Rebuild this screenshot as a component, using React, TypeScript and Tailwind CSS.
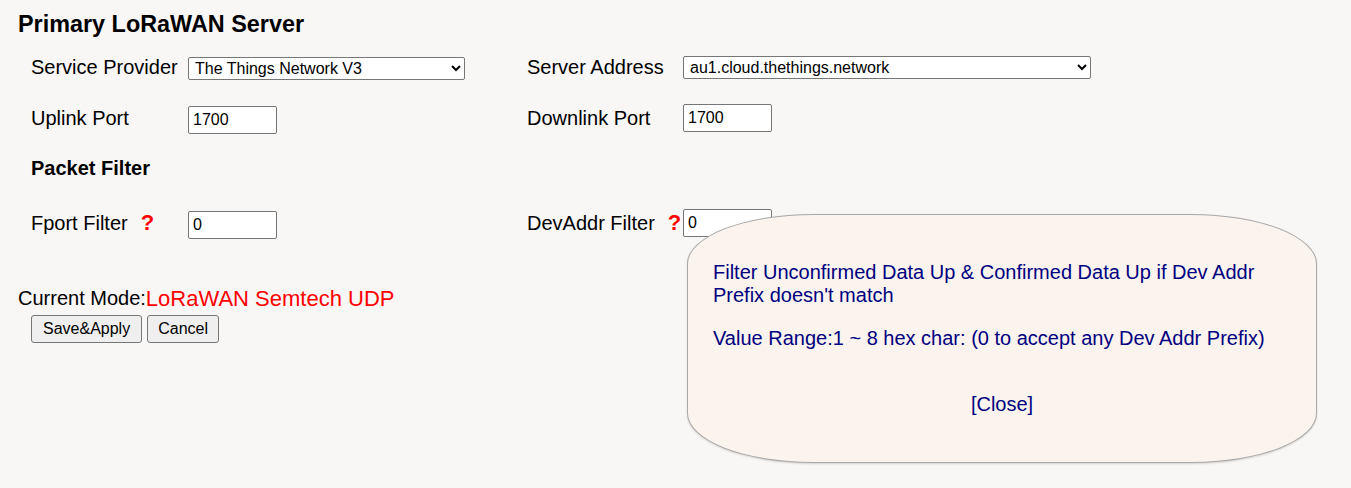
import React from 'react';

const font = { fontFamily: '"Liberation Sans", Arial, sans-serif' };

function Help() {
  return <span className="text-[22px] font-bold text-[#ff0000] leading-none">?</span>;
}

function TextBox({ value }: { value: string }) {
  return (
    <input
      defaultValue={value}
      className="w-[89px] h-[28px] bg-white border border-[#767676] rounded-[2px] px-[4px] text-[16px] text-black outline-none"
    />
  );
}

function Select({ value, width }: { value: string; width: string }) {
  return (
    <select
      defaultValue={value}
      className={`${width} h-[23px] bg-white border border-[#767676] rounded-[2px] pl-[2px] text-[16px] text-black`}
    >
      <option>{value}</option>
    </select>
  );
}

export default function App() {
  return (
    <div className="relative w-[1351px] h-[488px] bg-[#f9f6f6] text-black overflow-hidden" style={font}>
      <div className="pl-[18px]">
        <div className="h-[50px] flex items-center text-[23.4px] font-bold">Primary LoRaWAN Server</div>

        <div className="pl-[13px]">
          {/* Server row */}
          <div className="h-[34px] flex items-center text-[20px]">
            <span className="w-[157px]">Service Provider</span>
            <span className="w-[339px]">
              <Select value="The Things Network V3" width="w-[277px]" />
            </span>
            <span className="w-[156px]">Server Address</span>
            <Select value="au1.cloud.thethings.network" width="w-[408px]" />
          </div>

          {/* Ports */}
          <div className="mt-[17px] h-[34px] flex items-center text-[20px]">
            <span className="w-[157px]">Uplink Port</span>
            <span className="w-[339px]">
              <TextBox value="1700" />
            </span>
            <span className="w-[156px]">Downlink Port</span>
            <TextBox value="1700" />
          </div>

          <div className="mt-[16px] h-[34px] flex items-center text-[20px] font-bold">Packet Filter</div>

          {/* Filters */}
          <div className="mt-[21px] h-[34px] flex items-center text-[20px]">
            <span className="w-[157px] flex items-center">
              Fport Filter
              <span className="ml-[13px]">
                <Help />
              </span>
            </span>
            <span className="w-[339px]">
              <TextBox value="0" />
            </span>
            <span className="w-[156px] flex items-center">
              DevAddr Filter
              <span className="ml-[13px]">
                <Help />
              </span>
            </span>
            <TextBox value="0" />
          </div>
        </div>

        <div className="mt-[41px] h-[34px] flex items-center text-[20px]">
          Current Mode:<span className="text-[22px] text-[#ff0000]">LoRaWAN Semtech UDP</span>
        </div>

        <div className="pl-[13px] flex gap-[5px]">
          <button className="h-[28px] px-[11px] bg-[#efefef] border border-[#767676] rounded-[3px] text-[16px]">
            Save&amp;Apply
          </button>
          <button className="h-[28px] px-[10px] bg-[#efefef] border border-[#767676] rounded-[3px] text-[16px]">
            Cancel
          </button>
        </div>
      </div>

      {/* Help popup */}
      <div className="absolute left-[687px] top-[214px] w-[630px] h-[249px] rounded-[20%] border border-[#a9a9a9] bg-[#faf3ee] shadow-[0_1px_2px_rgba(0,0,0,0.15)] pl-[25px] pr-[25px] pt-[46px] text-[20px] leading-[23px] text-[#000080]">
        <p>Filter Unconfirmed Data Up &amp; Confirmed Data Up if Dev Addr Prefix doesn&#39;t match</p>
        <p className="mt-[20px]">Value Range:1 ~ 8 hex char: (0 to accept any Dev Addr Prefix)</p>
        <p className="mt-[43px] text-center">[Close]</p>
      </div>
    </div>
  );
}
